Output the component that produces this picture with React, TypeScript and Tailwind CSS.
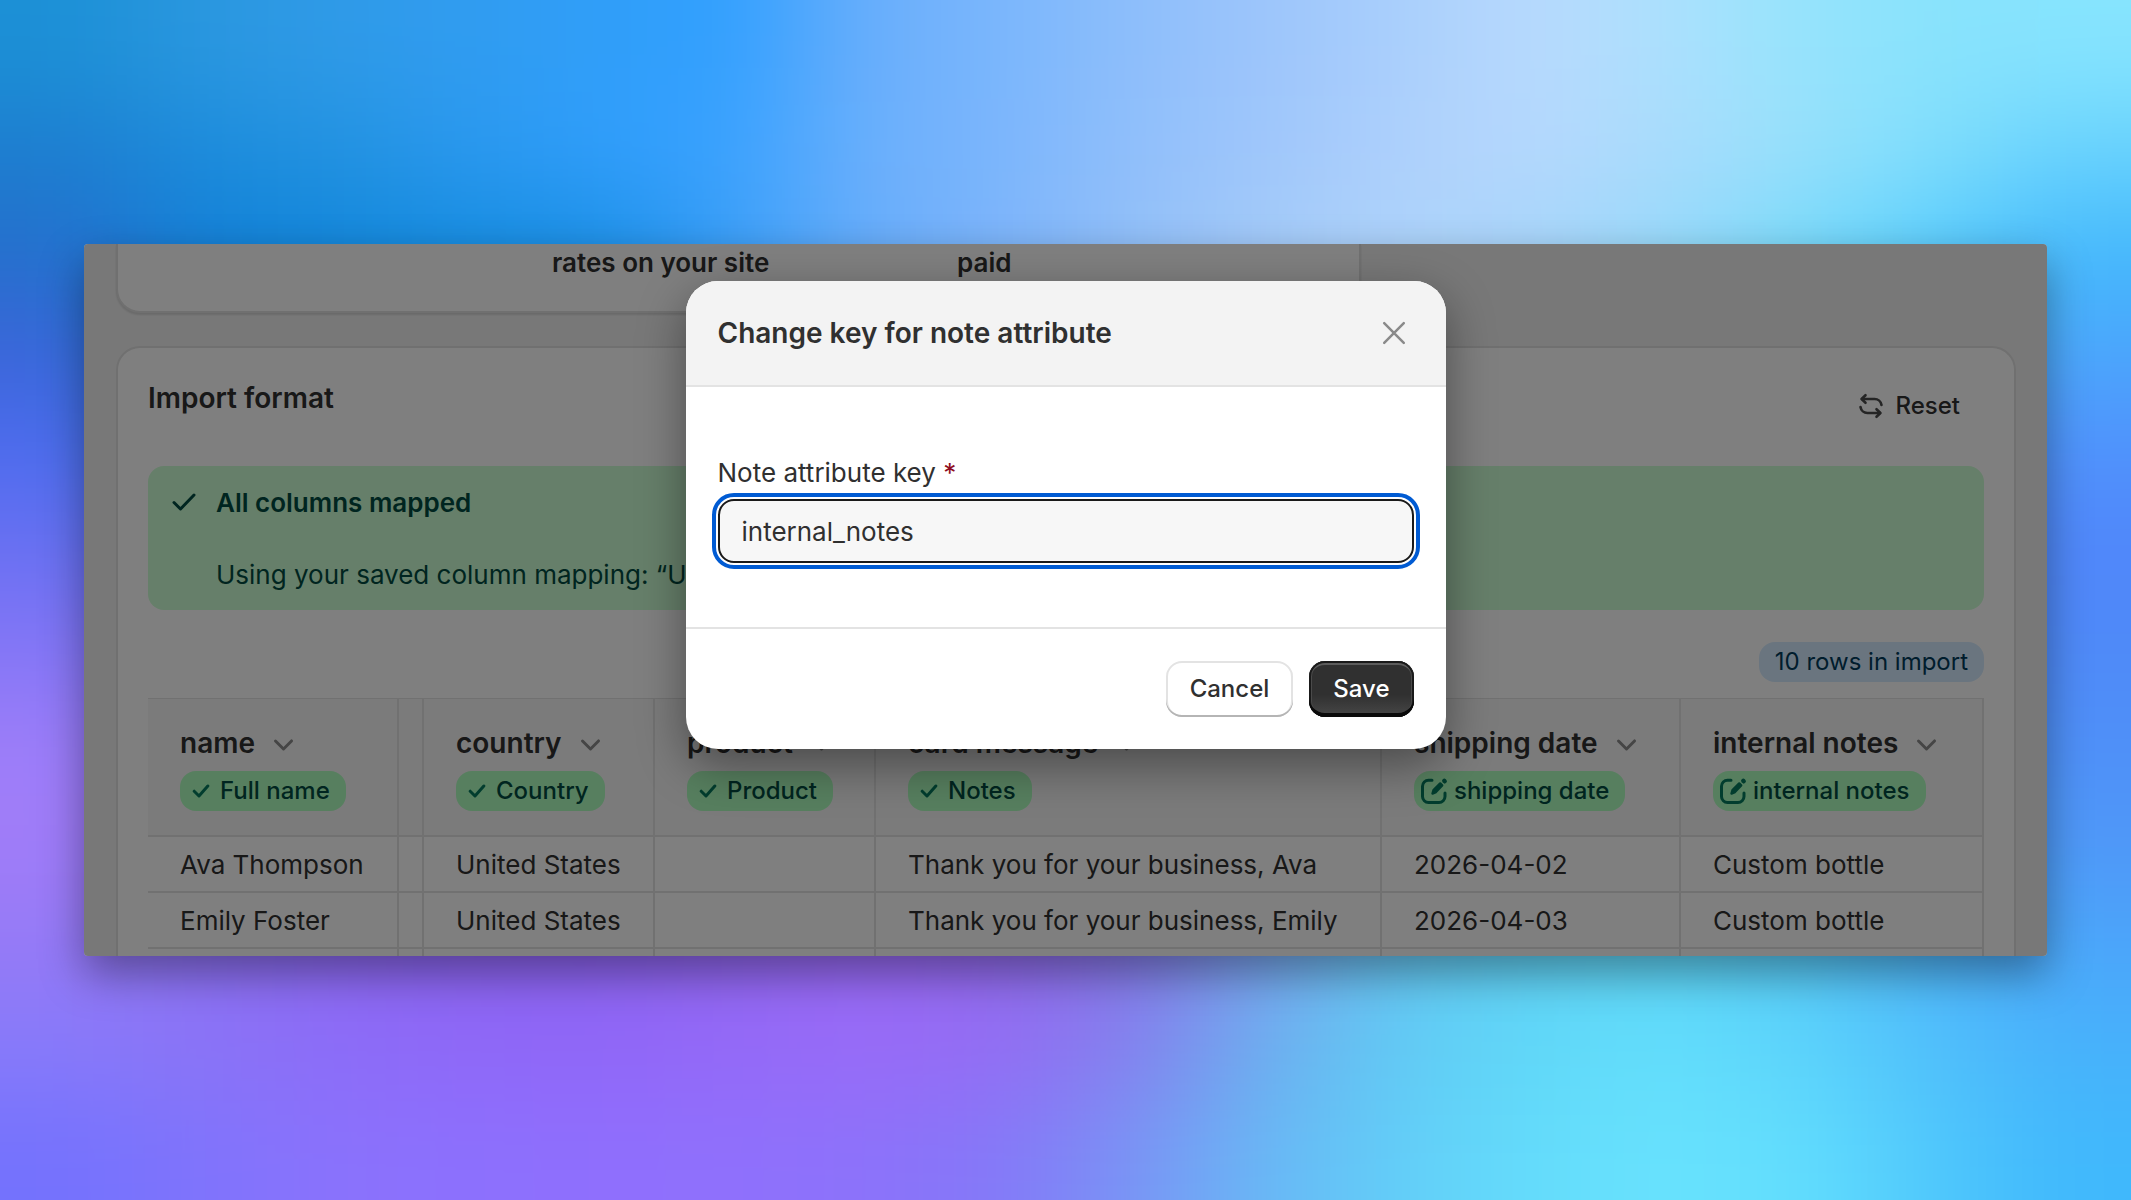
import type { ReactNode } from "react";

/* ---------- Backdrop ---------- */

const SKY: string[][] = [
  ["#1c90d6", "#2a97df", "#2f9ae7", "#309cf0", "#309ef8", "#31a0ff", "#69aefb", "#7ab6fc", "#8dbefb", "#9dc5fb", "#a9cffc", "#b8d9fd", "#ace0fd", "#96e4fc", "#88e2fc", "#86e4fe"],
  ["#1d7ed0", "#1c8cdc", "#2292e0", "#2a98ee", "#309efc", "#3aa2ff", "#6aaffc", "#7bb5fc", "#90bffb", "#9fc6fb", "#aed0fc", "#b6d8fd", "#a9dbfc", "#98e0fb", "#80defc", "#68d2fd"],
  ["#2470cc", "#1280d6", "#1286da", "#168cdf", "#1a8ee4", "#3a9ef8", "#68adfa", "#7db4fa", "#92bff8", "#a4cbf8", "#aed3fa", "#a8d5fa", "#98d9fa", "#78dafa", "#58cdfc", "#44b9fc"],
  ["#3a66d8", "#1a78d2", "#1583d8", "#1485da", "#1a8ade", "#3a9af0", "#62a8f8", "#7ab2f8", "#90bff8", "#a0cbf8", "#a8d3f9", "#a5d5fa", "#8edafa", "#6cd6fb", "#52bcfc", "#4ba6fc"],
  ["#4d6cee", "#3a70dc", "#3a70dc", "#5a90ee", "#5a90ee", "#5a90ee", "#5a90ee", "#5a90ee", "#5a90ee", "#5a90ee", "#5a90ee", "#5a90ee", "#5a90ee", "#5a90ee", "#509afc", "#5092fc"],
  ["#6a70f2", "#506ce4", "#506ce4", "#506ce4", "#506ce4", "#506ce4", "#5a90ee", "#5a90ee", "#5a90ee", "#5a90ee", "#5a90ee", "#5a90ee", "#5a90ee", "#5a90ee", "#508afa", "#5086fa"],
  ["#8476f6", "#7a6cf0", "#7a6cf0", "#7a6cf0", "#7a6cf0", "#7a6cf0", "#5a90ee", "#5a90ee", "#5a90ee", "#5a90ee", "#5a90ee", "#5a90ee", "#5a90ee", "#5a90ee", "#4f8cf8", "#4f8af8"],
  ["#9e7ef9", "#8a6ff2", "#8a6ff2", "#8a6ff2", "#8a6ff2", "#8a6ff2", "#8a6ff2", "#8a6ff2", "#5a90ee", "#5a90ee", "#5a90ee", "#5a90ee", "#5a90ee", "#5a90ee", "#4f94f8", "#4f90f8"],
  ["#a07cf8", "#9072f4", "#9070f2", "#9068f0", "#9066f0", "#9066f0", "#9468f0", "#9468f0", "#8a70ea", "#80a0f0", "#70c0f0", "#60ccf4", "#60ccf4", "#50c0f8", "#4ea4f8", "#4f98f8"],
  ["#947af6", "#8c70f2", "#8b68f0", "#8a62ee", "#8a62ee", "#9066ee", "#9668f2", "#9069ea", "#8478e6", "#7aa6ee", "#64c8f2", "#60d2f6", "#5ed6f8", "#58ccf8", "#4fb6fa", "#4ba6fa"],
  ["#877afa", "#8a74f6", "#8c6cf8", "#8f68f8", "#9066f8", "#9469f8", "#996bf8", "#946cf4", "#8480ee", "#6caeee", "#60caf4", "#60d8f8", "#62defb", "#5cd4fb", "#50c0fb", "#47b2fb"],
  ["#7472fd", "#7f74fc", "#8a72fc", "#8c70fd", "#8f6ffd", "#8f70fc", "#8c72fa", "#8478f8", "#7a94f5", "#68b8f5", "#62cef8", "#64dcfb", "#68e2fd", "#62defd", "#50c8fc", "#40b8fc"],
];

function Backdrop() {
  return (
    <svg aria-hidden="true" className="absolute inset-0 h-full w-full" viewBox="0 0 1600 900" preserveAspectRatio="none">
      <defs>
        <filter id="soft" filterUnits="userSpaceOnUse" x="-200" y="-200" width="2000" height="1300" colorInterpolationFilters="sRGB">
          <feGaussianBlur stdDeviation="34 36" />
        </filter>
        {SKY.map((row, r) => (
          <linearGradient key={r} id={`sky-${r}`} gradientUnits="userSpaceOnUse" x1="50" x2="1550" y1="0" y2="0">
            {row.map((color, c) => (
              <stop key={c} offset={c / 15} stopColor={color} />
            ))}
          </linearGradient>
        ))}
      </defs>
      <g filter="url(#soft)">
        {SKY.map((_, r) => (
          <rect
            key={r}
            x="-200"
            width="2000"
            y={r === 0 ? -200 : r * 75}
            height={r === 0 || r === 11 ? 275 : 76}
            fill={`url(#sky-${r})`}
          />
        ))}
      </g>
    </svg>
  );
}

/* ---------- Icons ---------- */

function CheckIcon({ className }: { className: string }) {
  return (
    <svg aria-hidden="true" viewBox="0 0 24 18" fill="none" stroke="currentColor" strokeWidth="3" strokeLinecap="round" strokeLinejoin="round" className={className}>
      <path d="M2 9.5 8.5 16 22 2" />
    </svg>
  );
}

function SmallCheckIcon() {
  return (
    <svg aria-hidden="true" viewBox="0 0 18 14" fill="none" stroke="currentColor" strokeWidth="3" strokeLinecap="round" strokeLinejoin="round" className="h-3.5 w-[18px] text-[#047b5d]">
      <path d="M2.2 7.2 7 12 15.8 2" />
    </svg>
  );
}

function EditIcon() {
  return (
    <svg aria-hidden="true" viewBox="0 0 28 28" fill="none" stroke="currentColor" className="size-7 text-[#047b5d]">
      <path d="M12 3.2H8.5A6 6 0 0 0 2.5 9.2V19.5A6 6 0 0 0 8.5 25.5H19A6 6 0 0 0 25 19.5V16" strokeWidth="3" strokeLinecap="round" />
      <path d="M12.5 16.5 13.5 13.2 20.2 6.4 22.2 8.4 15.5 15.4Z" fill="currentColor" strokeWidth="2.4" strokeLinejoin="round" />
      <path d="M24.3 3.9 24.7 4.3" strokeWidth="4.4" strokeLinecap="round" />
    </svg>
  );
}

function ChevronIcon() {
  return (
    <svg aria-hidden="true" viewBox="0 0 20 20" fill="currentColor" className="size-10 text-[#8a8a8a]">
      <path d="M5.72 8.47a.75.75 0 0 1 1.06 0l3.47 3.47 3.47-3.47a.75.75 0 1 1 1.06 1.06l-4 4a.75.75 0 0 1-1.06 0l-4-4a.75.75 0 0 1 0-1.06" />
    </svg>
  );
}

function ResetIcon() {
  return (
    <svg aria-hidden="true" viewBox="0 0 24 26" fill="none" stroke="currentColor" strokeWidth="2.6" strokeLinecap="round" strokeLinejoin="round" className="h-[26px] w-6 text-[#4a4a4a]">
      <path d="M6.5 2.2 2.6 6 6.5 9.8" />
      <path d="M3 6H15.5A7 7 0 0 1 22.5 12" />
      <path d="M17.5 16.2 21.4 20 17.5 23.8" />
      <path d="M21 20H8.5A7 7 0 0 1 1.5 14" />
    </svg>
  );
}

function CloseIcon() {
  return (
    <svg aria-hidden="true" viewBox="0 0 24 24" fill="none" stroke="currentColor" strokeWidth="2.5" strokeLinecap="round" className="size-6">
      <path d="M2.2 2.2 21.8 21.8M21.8 2.2 2.2 21.8" />
    </svg>
  );
}

/* ---------- Import table ---------- */

type Column = { key: string; title: string; badge: string; icon: "check" | "edit"; width: string };

const COLUMNS: Column[] = [
  { key: "name", title: "name", badge: "Full name", icon: "check", width: "w-[251px]" },
  { key: "country", title: "country", badge: "Country", icon: "check", width: "w-[231px]" },
  { key: "product", title: "product", badge: "Product", icon: "check", width: "w-[221px]" },
  { key: "message", title: "card message", badge: "Notes", icon: "check", width: "" },
  { key: "date", title: "shipping date", badge: "shipping date", icon: "edit", width: "w-[299px]" },
  { key: "notes", title: "internal notes", badge: "internal notes", icon: "edit", width: "w-[303px]" },
];

const ROWS: Record<string, string>[] = [
  { name: "Ava Thompson", country: "United States", message: "Thank you for your business, Ava", date: "2026-04-02", notes: "Custom bottle" },
  { name: "Emily Foster", country: "United States", message: "Thank you for your business, Emily", date: "2026-04-03", notes: "Custom bottle" },
  {},
];

function MappingBadge({ icon, children }: { icon: "check" | "edit"; children: ReactNode }) {
  return (
    <span
      className={
        icon === "check"
          ? "inline-flex h-10 items-center gap-2.5 rounded-2xl bg-[#affebf] pr-4 pl-3 text-2xl font-medium text-[#014b40]"
          : "inline-flex h-10 items-center gap-1.5 rounded-2xl bg-[#affebf] pr-4 pl-1.5 text-2xl font-medium text-[#014b40]"
      }
    >
      {icon === "check" ? <SmallCheckIcon /> : <EditIcon />}
      {children}
    </span>
  );
}

function HeaderCell({ column }: { column: Column }) {
  return (
    <th scope="col" className={`${column.width} h-[138px] border-r-2 border-b-2 border-[#e3e3e3] px-8 pt-6 pb-6 text-left align-middle font-normal whitespace-nowrap`}>
      <button type="button" className="flex h-10 items-center gap-2 text-[28px] font-semibold">
        {column.title}
        <ChevronIcon />
      </button>
      <div className="mt-2 flex">
        <MappingBadge icon={column.icon}>{column.badge}</MappingBadge>
      </div>
    </th>
  );
}

function ImportTable() {
  const cell = "h-14 border-r-2 border-b-2 border-[#e3e3e3] px-8 whitespace-nowrap";
  return (
    <table className="w-full table-fixed border-separate border-spacing-0 border-t border-[#e3e3e3] text-[26px]">
      <thead className="bg-[#f7f7f7]">
        <tr>
          <HeaderCell column={COLUMNS[0]} />
          <td className="w-[25px] border-r-2 border-b-2 border-[#e3e3e3]" />
          {COLUMNS.slice(1).map((column) => (
            <HeaderCell key={column.key} column={column} />
          ))}
        </tr>
      </thead>
      <tbody>
        {ROWS.map((row, i) => (
          <tr key={i}>
            <td className={cell}>{row.name}</td>
            <td className="border-r-2 border-b-2 border-[#e3e3e3]" />
            {COLUMNS.slice(1).map((column) => (
              <td key={column.key} className={cell}>
                {row[column.key]}
              </td>
            ))}
          </tr>
        ))}
      </tbody>
    </table>
  );
}

/* ---------- Page sections ---------- */

function RatesCard() {
  return (
    <section className="flex h-[69px] w-[1245px] max-w-full rounded-b-3xl border-x-2 border-b-2 border-[#e0e0e0] bg-white pl-[434px] text-[26px] leading-[38px] font-semibold shadow-[0_2px_2px_rgba(0,0,0,0.12)]">
      <p className="w-[405px]">rates on your site</p>
      <p>paid</p>
    </section>
  );
}

function ImportCard() {
  return (
    <section className="mt-[33px] rounded-t-3xl border-2 border-b-0 border-[#e0e0e0] bg-white px-[30px]">
      <div className="flex h-[118px] items-start justify-between pt-[30px]">
        <h2 className="text-[28px] leading-10 font-semibold">Import format</h2>
        <button type="button" className="mr-6 flex h-14 items-center gap-3 text-2xl font-medium">
          <ResetIcon />
          Reset
        </button>
      </div>
      <div className="flex h-36 gap-5 rounded-2xl bg-[#cdfed4] px-6 pt-[17px] text-[26px] leading-10 text-[#014b40]">
        <CheckIcon className="mt-[10px] h-[18px] w-6" />
        <div className="flex flex-col gap-8">
          <p className="font-semibold">All columns mapped</p>
          <p className="whitespace-nowrap">Using your saved column mapping: “US</p>
        </div>
      </div>
      <div className="flex justify-end pt-8 pb-4">
        <span className="flex h-10 items-center rounded-2xl bg-[#d5ebff] px-4 text-2xl text-[#003a5a]">10 rows in import</span>
      </div>
      <ImportTable />
    </section>
  );
}

function KeyDialog() {
  return (
    <form
      role="dialog"
      aria-labelledby="dialog-title"
      className="w-[760px] max-w-full self-start overflow-hidden rounded-[32px] bg-white shadow-[0_16px_48px_rgba(0,0,0,0.4)]"
    >
      <header className="flex h-[106px] items-center justify-between border-b-2 border-[#e3e3e3] bg-[#f3f3f3] pr-10 pl-8">
        <h2 id="dialog-title" className="text-[28px] font-semibold">
          Change key for note attribute
        </h2>
        <button type="button" aria-label="Close" className="text-[#8a8a8a]">
          <CloseIcon />
        </button>
      </header>
      <div className="px-8 pt-[66px] pb-16 text-[26px]">
        <label htmlFor="note-key" className="block leading-10">
          Note attribute key <span className="text-[#8e0b21]">*</span>
        </label>
        <input
          id="note-key"
          type="text"
          defaultValue="internal_notes"
          className="mt-[6px] block h-16 w-full rounded-2xl border-2 border-[#1a1a1a] bg-[#f7f7f7] px-[22px] outline-4 outline-offset-2 outline-[#005bd3]"
        />
      </div>
      <footer className="flex justify-end gap-4 border-t-2 border-[#e3e3e3] p-8 text-2xl font-medium">
        <button
          type="button"
          className="h-14 rounded-2xl bg-white px-6 shadow-[inset_0_-2px_0_#b5b5b5,inset_0_0_0_2px_#e3e3e3]"
        >
          Cancel
        </button>
        <button
          type="submit"
          className="h-14 rounded-2xl bg-linear-to-b from-[#303030] from-60% to-[#484848] px-6 text-white shadow-[inset_0_-4px_0_#0a0a0a,inset_0_0_0_2px_#1a1a1a,inset_0_4px_0_#5c5c5c,inset_0_0_0_3px_#4a4a4a]"
        >
          Save
        </button>
      </footer>
    </form>
  );
}

export default function App() {
  return (
    <div className="relative flex h-screen flex-col overflow-hidden px-[84px] py-[244px] font-['Inter',sans-serif] text-[#303030] [font-optical-sizing:none]">
      <Backdrop />
      <main className="relative min-h-0 flex-1 overflow-hidden rounded bg-[#f1f1f1] shadow-[0_18px_44px_rgba(0,0,0,0.38)]">
        <div className="pr-[31px] pl-8">
          <RatesCard />
          <ImportCard />
        </div>
        <div className="absolute inset-0 flex justify-center bg-black/50 pt-[37px]">
          <KeyDialog />
        </div>
      </main>
    </div>
  );
}
